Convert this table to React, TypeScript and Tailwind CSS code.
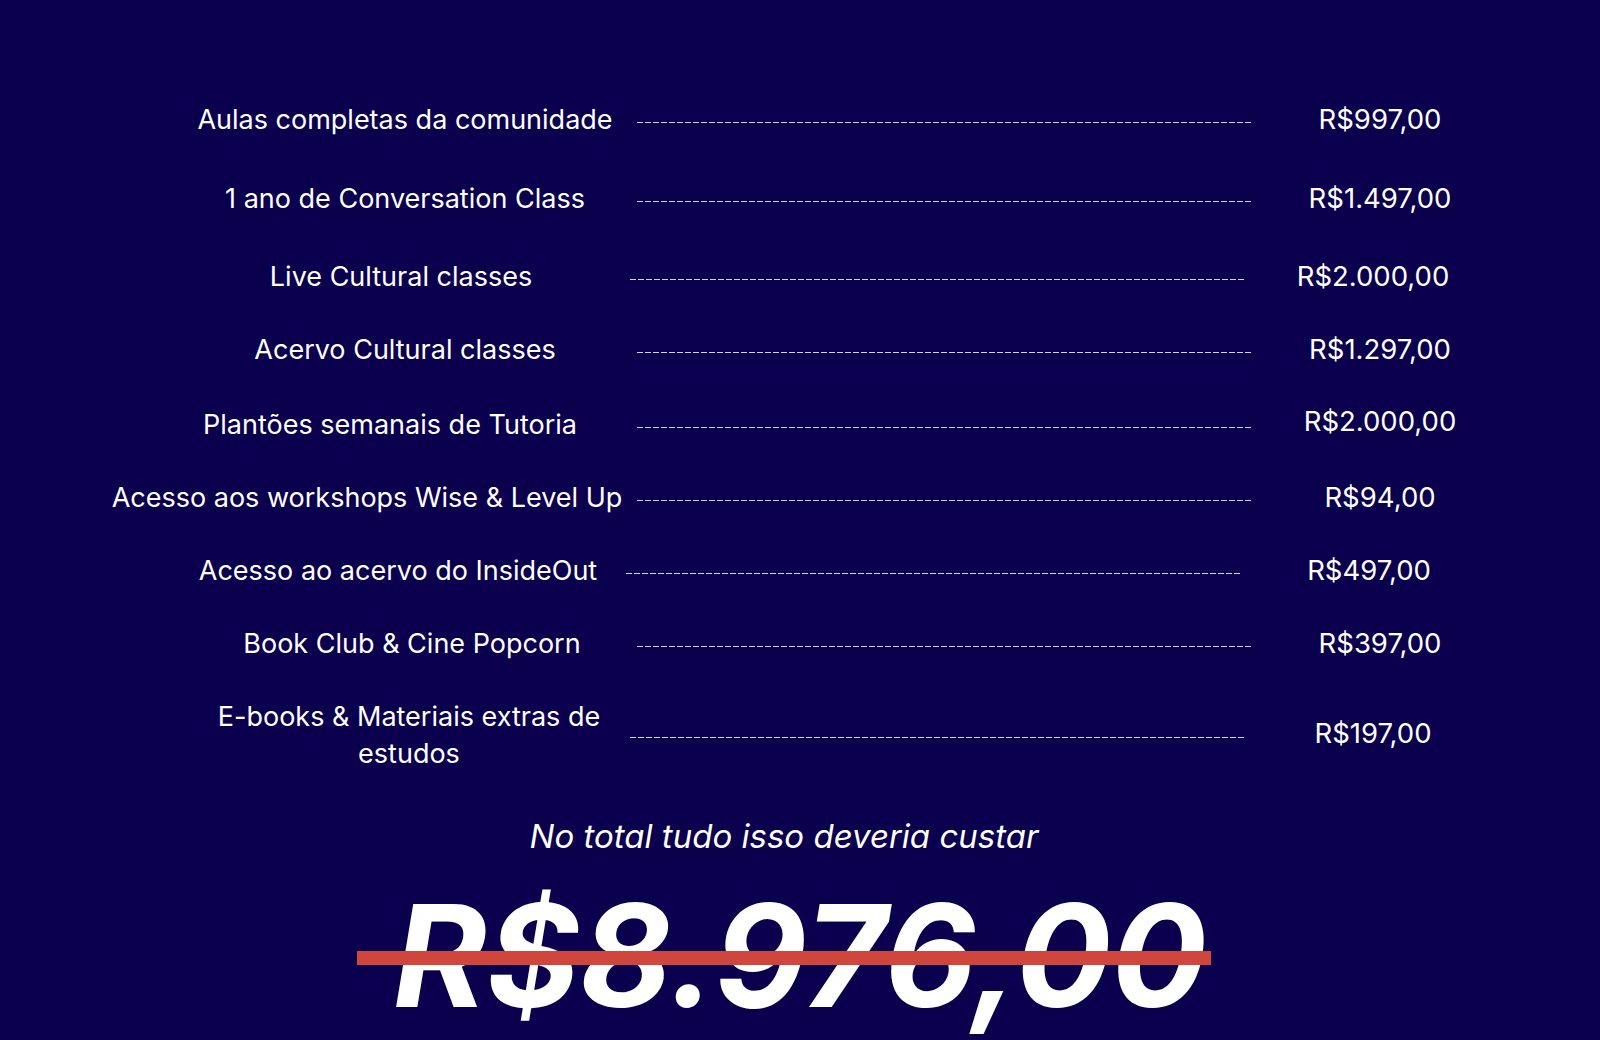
import React from "react";

interface Item {
  label: string;
  price: string;
  row: string;
  lab: string;
  line: string;
  priceCls?: string;
}

const items: Item[] = [
  { label: "Aulas completas da comunidade", price: "R$997,00", row: "mt-0", lab: "w-[637px] pl-[173px]", line: "w-[616px]" },
  { label: "1 ano de Conversation Class", price: "R$1.497,00", row: "mt-[42px]", lab: "w-[637px] pl-[173px]", line: "w-[616px]" },
  { label: "Live Cultural classes", price: "R$2.000,00", row: "mt-[41px]", lab: "w-[630px] pl-[172px]", line: "w-[616px]" },
  { label: "Acervo Cultural classes", price: "R$1.297,00", row: "mt-[36px]", lab: "w-[637px] pl-[173px]", line: "w-[616px]" },
  { label: "Plantões semanais de Tutoria", price: "R$2.000,00", row: "mt-[38px]", lab: "w-[637px] pl-[143px]", line: "w-[616px]", priceCls: "-mt-[6px]" },
  { label: "Acesso aos workshops Wise & Level Up", price: "R$94,00", row: "mt-[36px]", lab: "w-[637px] pl-[97px]", line: "w-[616px]" },
  { label: "Acesso ao acervo do InsideOut", price: "R$497,00", row: "mt-[36px]", lab: "w-[626px] pl-[170px]", line: "w-[616px]" },
  { label: "Book Club & Cine Popcorn", price: "R$397,00", row: "mt-[36px]", lab: "w-[637px] pl-[187px]", line: "w-[616px]" },
  { label: "E-books & Materiais extras de estudos", price: "R$197,00", row: "mt-[36px]", lab: "w-[630px] pl-[188px]", line: "w-[616px]", priceCls: "-mt-[4px]" },
];

const Row: React.FC<{ item: Item }> = ({ item }) => {
  return (
    <div className={"flex items-center " + item.row}>
      <div className={"shrink-0 text-center " + item.lab}>{item.label}</div>
      <div
        className={
          "shrink-0 h-px mt-[5px] bg-[repeating-linear-gradient(90deg,#d4d2ee_0_6px,transparent_6px_8px)] " +
          item.line
        }
      />
      <div className={"shrink-0 w-[254px] text-center text-[27.5px] " + (item.priceCls || "")}>{item.price}</div>
    </div>
  );
};

export default function App() {
  return (
    <div className="h-[1040px] w-full overflow-hidden bg-[#0b004e] text-white font-['Inter','Liberation_Sans',sans-serif]">
      <div className="pt-[101px] text-[27px] leading-[37px]">
        {items.map((item) => (
          <Row key={item.label} item={item} />
        ))}
      </div>

      <div className="flex justify-center pr-[32px] mt-[48px]">
        <p className="italic text-[33px] leading-none">No total tudo isso deveria custar</p>
      </div>

      <div className="relative mt-[31px]">
        <div className="flex justify-center">
          <span className="block italic font-bold text-[142px] leading-none">R$8.976,00</span>
        </div>
        <div className="absolute left-[357px] w-[854px] top-[67px] h-[14px] bg-[#d0453c]" />
      </div>
    </div>
  );
}
